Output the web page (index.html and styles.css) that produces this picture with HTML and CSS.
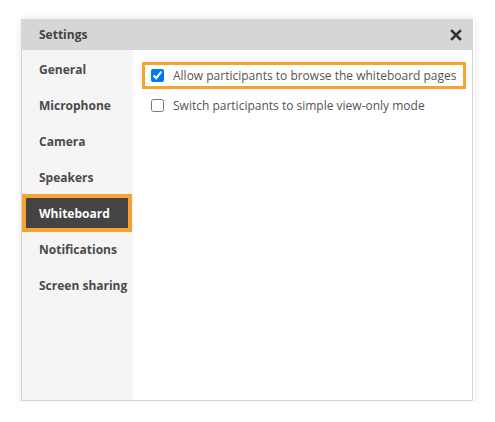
FILE: index.html
```html
<!DOCTYPE html>
<html>
<head>
<meta charset="utf-8">
<link rel="stylesheet" href="styles.css">
</head>
<body>
<div class="frame">
  <div class="dialog">
    <div class="header">
      <span class="title">Settings</span>
      <svg class="close" width="12" height="12" viewBox="0 0 12 12"><path d="M2 2 L10 10 M10 2 L2 10" stroke="#333" stroke-width="2.6" stroke-linecap="square"/></svg>
    </div>
    <div class="body">
      <nav class="sidebar">
        <div class="item">General</div>
        <div class="item">Microphone</div>
        <div class="item">Camera</div>
        <div class="item">Speakers</div>
        <div class="item active">Whiteboard</div>
        <div class="item">Notifications</div>
        <div class="item">Screen sharing</div>
      </nav>
      <div class="content">
        <label class="option highlighted"><input type="checkbox" checked><span>Allow participants to browse the whiteboard pages</span></label>
        <label class="option"><input type="checkbox"><span>Switch participants to simple view-only mode</span></label>
      </div>
    </div>
  </div>
</div>
</body>
</html>
```
FILE: styles.css
```css
html, body {
  margin: 0;
  padding: 0;
  background: #ffffff;
}
body {
  font-family: "Open Sans", "Noto Sans", sans-serif;
  padding: 19px 0 0 21px;
}
.frame {
  width: 454px;
  height: 384px;
  background: #fff;
  box-shadow: 0 0 8px rgba(0,0,0,0.10);
}
.dialog {
  width: 452px;
  height: 382px;
  box-sizing: border-box;
  border: 1px solid #d3d3d3;
  border-top: none;
  display: flex;
  flex-direction: column;
}
.header {
  height: 31px;
  background: #d6d6d6;
  margin: 0 -1px;
  display: flex;
  align-items: center;
  justify-content: space-between;
  padding: 0 11px 0 18px;
  flex: none;
}
.title {
  font-weight: 700;
  font-size: 12px;
  color: #444;
}
.close {
  display: block;
}
.body {
  flex: 1;
  display: flex;
}
.sidebar {
  width: 111px;
  background: #f5f5f5;
  padding-top: 1px;
}
.item {
  height: 36px;
  box-sizing: border-box;
  display: flex;
  align-items: center;
  padding-left: 17px;
  font-weight: 700;
  font-size: 12px;
  color: #4a4a4a;
}
.item.active {
  height: 38px;
  margin: -1px 1px -1px 0;
  border: 4px solid #f5a431;
  background: #444444;
  color: #ffffff;
  padding-left: 13px;
}
.content {
  flex: 1;
  padding: 12px 0 0 9px;
  display: flex;
  flex-direction: column;
  gap: 3px;
}
.option {
  width: 324px;
  height: 27px;
  box-sizing: border-box;
  border: 3px solid transparent;
  display: flex;
  align-items: center;
  padding-left: 6px;
  font-size: 12px;
  color: #555;
}
.option.highlighted {
  border-color: #f5a431;
}
.option input {
  margin: 0 9px 0 0;
  width: 13px;
  height: 13px;
}
```
